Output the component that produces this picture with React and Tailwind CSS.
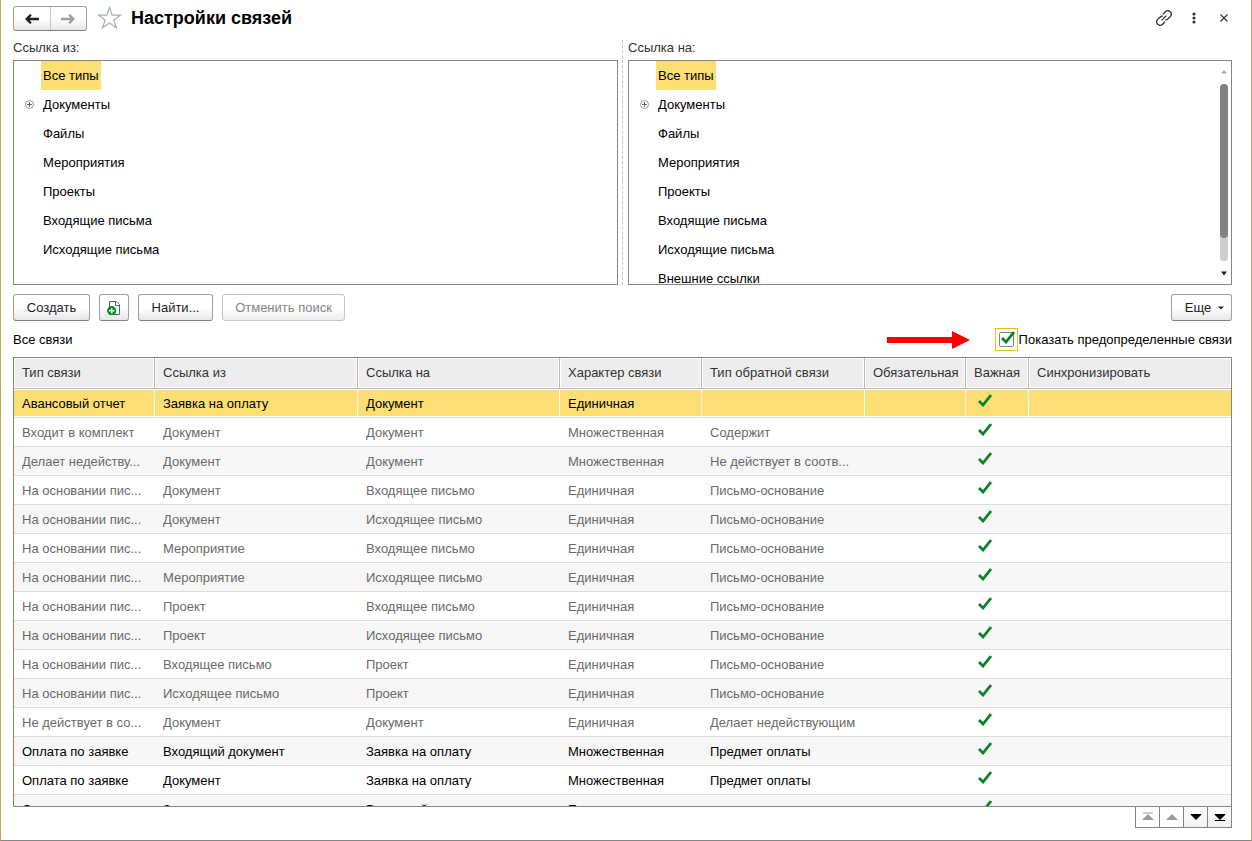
import React, { useState } from 'react';

const linkTypes = ['Все типы', 'Документы', 'Файлы', 'Мероприятия', 'Проекты', 'Входящие письма', 'Исходящие письма'];

const columns = [
  { title: 'Тип связи', width: 'w-[141px]' },
  { title: 'Ссылка из', width: 'w-[203px]' },
  { title: 'Ссылка на', width: 'w-[202px]' },
  { title: 'Характер связи', width: 'w-[142px]' },
  { title: 'Тип обратной связи', width: 'w-[163px]' },
  { title: 'Обязательная', width: 'w-[101px]' },
  { title: 'Важная', width: 'w-[63px]' },
  { title: 'Синхронизировать', width: '' },
];

const rows = [
  { cells: ['Авансовый отчет', 'Заявка на оплату', 'Документ', 'Единичная', ''] },
  { cells: ['Входит в комплект', 'Документ', 'Документ', 'Множественная', 'Содержит'], predefined: true },
  { cells: ['Делает недейству...', 'Документ', 'Документ', 'Множественная', 'Не действует в соотв...'], predefined: true },
  { cells: ['На основании пис...', 'Документ', 'Входящее письмо', 'Единичная', 'Письмо-основание'], predefined: true },
  { cells: ['На основании пис...', 'Документ', 'Исходящее письмо', 'Единичная', 'Письмо-основание'], predefined: true },
  { cells: ['На основании пис...', 'Мероприятие', 'Входящее письмо', 'Единичная', 'Письмо-основание'], predefined: true },
  { cells: ['На основании пис...', 'Мероприятие', 'Исходящее письмо', 'Единичная', 'Письмо-основание'], predefined: true },
  { cells: ['На основании пис...', 'Проект', 'Входящее письмо', 'Единичная', 'Письмо-основание'], predefined: true },
  { cells: ['На основании пис...', 'Проект', 'Исходящее письмо', 'Единичная', 'Письмо-основание'], predefined: true },
  { cells: ['На основании пис...', 'Входящее письмо', 'Проект', 'Единичная', 'Письмо-основание'], predefined: true },
  { cells: ['На основании пис...', 'Исходящее письмо', 'Проект', 'Единичная', 'Письмо-основание'], predefined: true },
  { cells: ['Не действует в со...', 'Документ', 'Документ', 'Единичная', 'Делает недействующим'], predefined: true },
  { cells: ['Оплата по заявке', 'Входящий документ', 'Заявка на оплату', 'Множественная', 'Предмет оплаты'] },
  { cells: ['Оплата по заявке', 'Документ', 'Заявка на оплату', 'Множественная', 'Предмет оплаты'] },
  { cells: ['Основание', 'Заявка на оплату', 'Входящий документ', 'Единичная', ''] },
];

const buttonStyle =
  'h-[27px] rounded-[3px] border border-[#a0a0a0] border-b-[#808080] bg-linear-to-b from-white from-50% to-[#e6e6e6] text-[#222]';

const CheckMark = ({ className }) => (
  <svg className={className} width="14" height="13" viewBox="0 0 14 13" fill="none" aria-hidden="true">
    <path d="M1 7 5 11 13 1" stroke="#0a8228" strokeWidth="2.8" />
  </svg>
);

const ArrowIcon = ({ flip, color }) => (
  <svg width="14" height="10" viewBox="0 0 14 10" className={flip ? 'rotate-180' : ''} aria-hidden="true">
    <path d="M0 5 5 0 6.8 1.2 4.8 3.7H14V6.3H4.8L6.8 8.8 5 10Z" fill={color} />
  </svg>
);

const Tree = ({ items, scrollable }) => {
  const [selected, setSelected] = useState('Все типы');

  return (
    <div className="flex h-[225px] overflow-hidden border border-[#858585]">
      <ul className="min-w-0 flex-1">
        {items.map((item) => (
          <li key={item} className="flex h-[29px] items-center">
            <span className="flex w-[27px] shrink-0 justify-center pl-1">
              {item === 'Документы' && (
                <button aria-label="Развернуть">
                  <svg width="9" height="9" viewBox="0 0 9 9" fill="none" className="block">
                    <circle cx="4.5" cy="4.5" r="4" stroke="#999" />
                    <path d="M2 4.5H7M4.5 2V7" stroke="#666" />
                  </svg>
                </button>
              )}
            </span>
            <button
              onClick={() => setSelected(item)}
              className={`h-full px-0.5 ${selected === item ? 'bg-[#fbde74]' : ''}`}
            >
              {item}
            </button>
          </li>
        ))}
      </ul>
      {scrollable && (
        <div className="flex w-[14px] flex-col items-center py-2">
          <svg width="6" height="5" viewBox="0 0 6 5" aria-hidden="true">
            <path d="M0 4.5 3 1 6 4.5Z" fill="#aaa" />
          </svg>
          <div className="my-[10px] w-2 flex-1 rounded-full bg-[#cdcdcd]">
            <div className="h-[154px] rounded-full bg-[#828282]" />
          </div>
          <svg width="6" height="5" viewBox="0 0 6 5" aria-hidden="true">
            <path d="M0 0.5H6L3 4.5Z" fill="#222" />
          </svg>
        </div>
      )}
    </div>
  );
};

const Header = () => (
  <header className="flex h-[30px] items-start pt-[6px]">
    <div className="flex h-[25px] w-[74px] divide-x divide-[#c8c8c8] rounded-[3px] border border-[#a0a0a0] border-b-[#808080] bg-linear-to-b from-white from-50% to-[#e6e6e6]">
      <button aria-label="Назад" className="flex flex-1 items-center justify-center">
        <ArrowIcon color="#222" />
      </button>
      <button aria-label="Вперед" className="flex flex-1 items-center justify-center">
        <ArrowIcon flip color="#a0a0a0" />
      </button>
    </div>
    <button aria-label="Избранное" className="ml-[10px]">
      <svg width="25" height="24" viewBox="0 0 25 24" fill="none" className="block">
        <path
          d="M12.5 1.5 15.2 9.2H23.5L16.9 14 19.4 21.8 12.5 17.1 5.6 21.8 8.1 14 1.5 9.2H9.8Z"
          stroke="#a4aeb6"
          strokeWidth="1.2"
        />
      </svg>
    </button>
    <h1 className="ml-[9px] flex-1 text-[18px] font-bold leading-6">Настройки связей</h1>
    <div className="flex h-6 items-center gap-[14px] text-[#333]">
      <button aria-label="Получить ссылку">
        <svg width="16" height="16" viewBox="0 0 16 16" fill="none" stroke="#333" strokeWidth="1.3" className="block">
          <path d="M7 4.2 9.4 1.8A3 3 0 0 1 14.2 6.6L11.8 9A3 3 0 0 1 9.3 9.8" />
          <path d="M9 11.8 6.6 14.2A3 3 0 0 1 1.8 9.4L4.2 7A3 3 0 0 1 6.7 6.2" />
          <path d="M5.6 10.4 10.4 5.6" />
        </svg>
      </button>
      <button aria-label="Дополнительно" className="flex w-4 justify-center">
        <svg width="4" height="12" viewBox="0 0 4 12" fill="#333" className="block">
          <circle cx="2" cy="2" r="1.6" />
          <circle cx="2" cy="6" r="1.6" />
          <circle cx="2" cy="10" r="1.6" />
        </svg>
      </button>
      <button aria-label="Закрыть" className="flex w-4 justify-center">
        <svg width="8" height="8" viewBox="0 0 8 8" stroke="#333" strokeWidth="1.2" className="block">
          <path d="M0.5 0.5 7.5 7.5M7.5 0.5 0.5 7.5" />
        </svg>
      </button>
    </div>
  </header>
);

const Toolbar = () => (
  <div className="mt-[9px] flex gap-[9px]">
    <button className={`${buttonStyle} w-[77px]`}>Создать</button>
    <button aria-label="Создать копированием" className={`${buttonStyle} flex w-[30px] items-center justify-center`}>
      <svg width="14" height="16" viewBox="0 0 14 16" fill="none">
        <path d="M2.5 1.5H9.5L12.5 4.5V14.5H2.5Z" fill="#fff" stroke="#4d6379" />
        <path d="M8.5 1.5V5.5H12.5" stroke="#4d6379" />
        <circle cx="4.7" cy="10.7" r="4.6" fill="#0b8c18" />
        <path d="M2 10.7H7.4M4.7 8V13.4" stroke="#fff" strokeWidth="1.5" />
      </svg>
    </button>
    <button className={`${buttonStyle} w-[75px]`}>Найти...</button>
    <button disabled className="h-[27px] w-[123px] rounded-[3px] border border-[#c4c4c4] bg-linear-to-b from-white from-50% to-[#ececec] text-[#858585]">
      Отменить поиск
    </button>
    <button className={`${buttonStyle} ml-auto flex w-[61px] items-center justify-center gap-[7px] pl-[6px]`}>
      Еще
      <svg width="6" height="4" viewBox="0 0 6 4" aria-hidden="true">
        <path d="M0 0.5H6L3 3.5Z" fill="#222" />
      </svg>
    </button>
  </div>
);

const LinksTable = () => {
  const [current, setCurrent] = useState(0);

  return (
    <div className="min-h-0 flex-1 overflow-hidden border border-[#858585]">
      <table className="w-full table-fixed border-separate border-spacing-0 text-left">
        <thead>
          <tr className="h-[31px]">
            {columns.map((column) => (
              <th
                key={column.title}
                className={`${column.width} truncate border-b border-r border-[#b8b8b8] bg-[#ededed] p-0 pl-2 font-normal text-[#333] inset-shadow-[0_0_0_1px_#fff] last:border-r-0`}
              >
                {column.title}
              </th>
            ))}
          </tr>
        </thead>
        <tbody>
          {rows.map((row, index) => {
            const active = index === current;
            const cell = `h-[29px] truncate border-b border-[#dcdcdc] p-0 pl-2 ${
              active ? 'border-r border-r-white bg-[#fbde74] inset-shadow-[0_1px_#fff,0_-1px_#fff] last:border-r-0' : ''
            }`;
            return (
              <tr
                key={index}
                onClick={() => setCurrent(index)}
                className={`${index % 2 === 0 ? 'bg-[#f7f7f7]' : 'bg-white'} ${row.predefined ? 'text-[#6a6a6a]' : 'text-black'}`}
              >
                {row.cells.map((text, i) => (
                  <td key={i} className={cell}>
                    <span className="block truncate pt-0.5">{text}</span>
                  </td>
                ))}
                <td className={cell} />
                <td className={cell}>
                  <CheckMark className="mb-1.5 ml-1" />
                </td>
                <td className={cell} />
              </tr>
            );
          })}
        </tbody>
      </table>
    </div>
  );
};

const pagerButtons = [
  { label: 'В начало', path: 'M2 1H12M2 7.5 7 2.5 12 7.5Z', disabled: true },
  { label: 'Вверх', path: 'M2 7.5 7 2.5 12 7.5Z', disabled: true },
  { label: 'Вниз', path: 'M2 2.5 7 7.5 12 2.5Z' },
  { label: 'В конец', path: 'M2 2.5 7 7.5 12 2.5ZM2 8.5H12' },
];

const App = () => {
  const [showPredefined, setShowPredefined] = useState(true);

  return (
    <div className="flex h-screen flex-col border-x border-b border-x-[#c3aa48] border-b-[#858585] bg-white pr-[19px] pb-3 pl-3 font-['Liberation_Sans',Arial,sans-serif] text-[13px] leading-4 text-black">
      <Header />

      <section className="mt-[10px] flex">
        <div className="min-w-0 flex-[1_1_1px]">
          <h2 className="mb-1 text-[#333]">Ссылка из:</h2>
          <Tree items={linkTypes} />
        </div>
        <div className="mr-[5px] ml-1 border-l border-dashed border-[#c4c4c4]" />
        <div className="min-w-0 flex-1">
          <h2 className="mb-1 text-[#333]">Ссылка на:</h2>
          <Tree items={[...linkTypes, 'Внешние ссылки']} scrollable />
        </div>
      </section>

      <Toolbar />

      <div className="mt-[7px] mb-[6px] flex h-[23px] items-center">
        <h2 className="flex-1">Все связи</h2>
        <svg width="83" height="18" viewBox="0 0 83 18" className="mr-[25px]" aria-hidden="true">
          <path d="M0 6H65V0L83 9 65 18V12H0Z" fill="#f00" />
        </svg>
        <label className="flex items-center gap-px">
          <span className="relative flex size-[23px] items-center justify-center border border-[#f5bd1c]">
            <input
              type="checkbox"
              checked={showPredefined}
              onChange={(e) => setShowPredefined(e.target.checked)}
              className="size-[15px] appearance-none rounded-xs border border-[#858585] bg-white"
            />
            {showPredefined && <CheckMark className="pointer-events-none absolute top-[2px] left-[5px]" />}
          </span>
          Показать предопределенные связи
        </label>
      </div>

      <LinksTable />

      <div className="-mt-px flex justify-end">
        <div className="flex divide-x divide-[#858585] border border-[#858585]">
          {pagerButtons.map((button) => (
            <button
              key={button.label}
              aria-label={button.label}
              disabled={button.disabled}
              className="flex h-5 w-6 items-center justify-center bg-linear-to-b from-white to-[#f0f0f0] text-black last:w-[23px] disabled:from-white disabled:to-white disabled:text-[#999]"
            >
              <svg width="14" height="10" viewBox="0 0 14 10" fill="currentColor" stroke="currentColor" strokeWidth="1">
                <path d={button.path} />
              </svg>
            </button>
          ))}
        </div>
      </div>
    </div>
  );
};

export default App;
